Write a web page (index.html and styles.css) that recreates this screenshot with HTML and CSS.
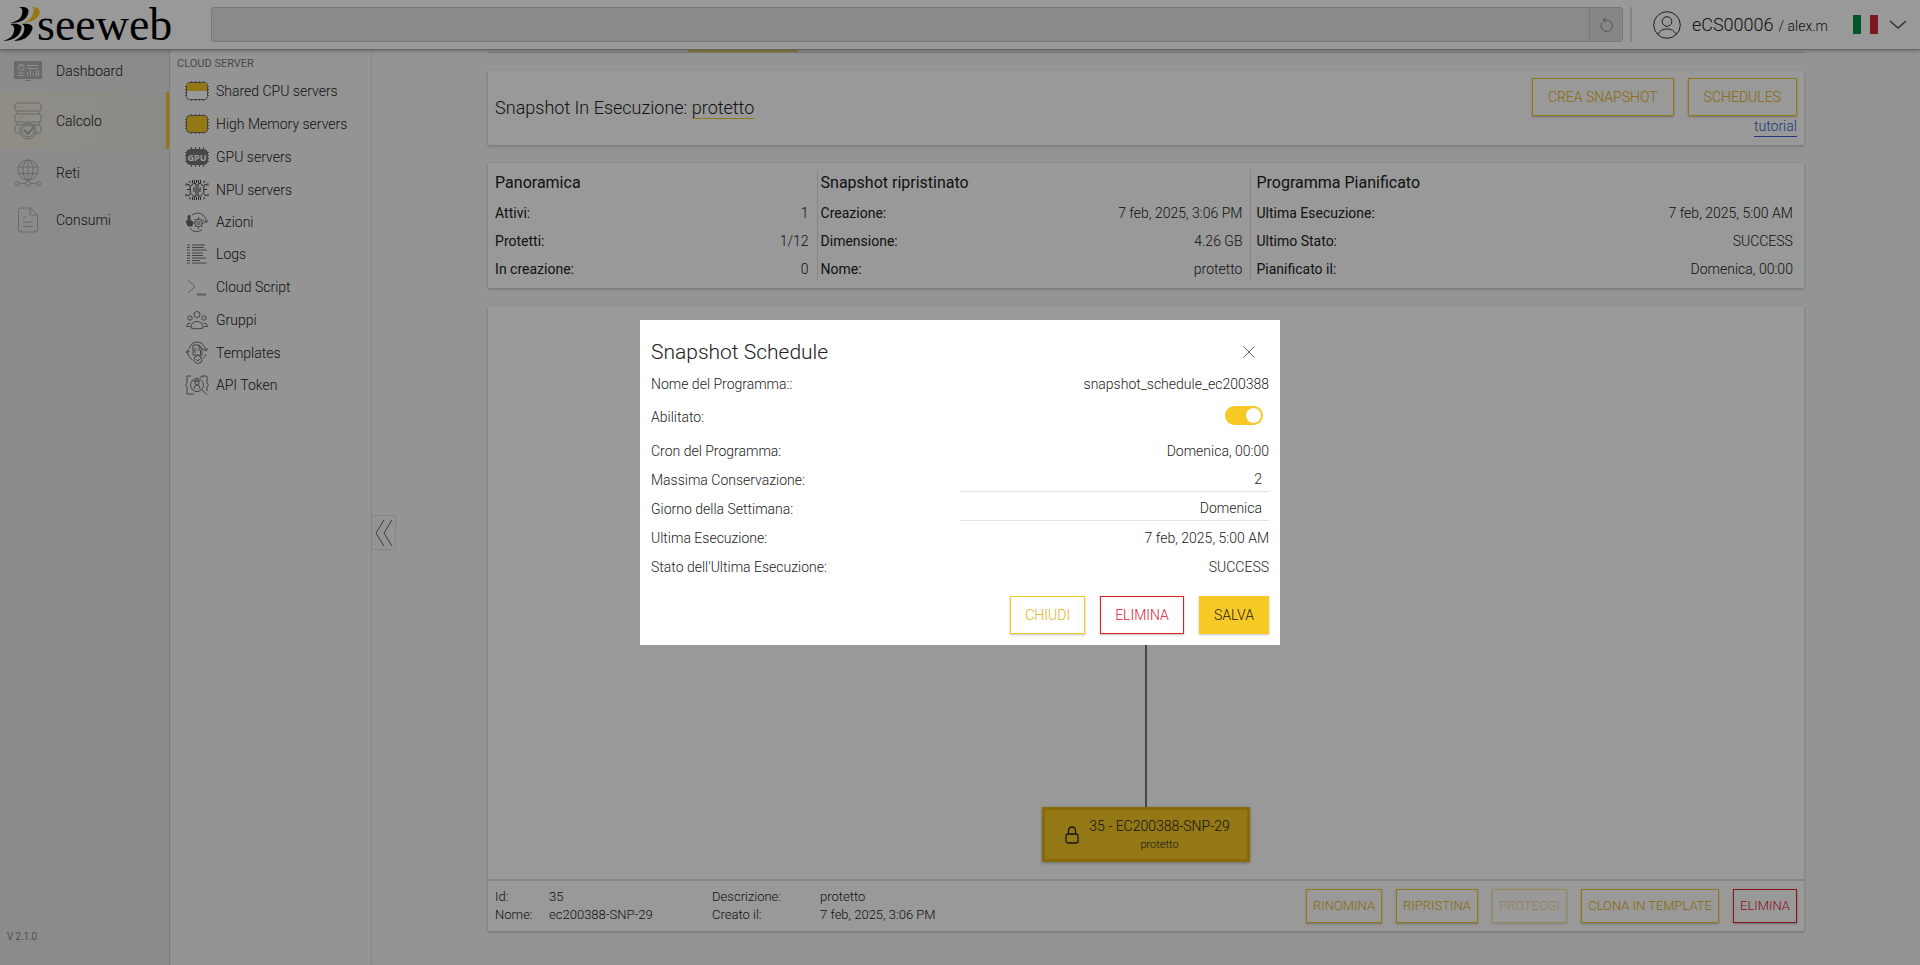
FILE: index.html
```html
<!DOCTYPE html>
<html lang="it">
<head>
<meta charset="utf-8">
<title>Seeweb - Snapshot</title>
<link rel="stylesheet" href="styles.css">
</head>
<body>
<div class="app">
  <header class="topbar">
    <a class="logo" href="#" aria-label="seeweb">
      <svg class="logo-mark" viewBox="0 0 38 36" aria-hidden="true">
        <path d="M16 0h4c6 0 6 4 5 7-2 6-8 9-18 9 7-2 11-4 12-9 1-4 0-6-3-7z"/>
        <path class="logo-gold" d="M29 0c7 0 9 3 7 8-3 5-8 7-15 8 5-3 8-5 9-10 1-3 1-5-1-6z"/>
        <path d="M7 17c9-1 13 1 11 6-2 7-9 11-18 11 7-2 10-5 11-10 1-4-1-6-4-7z"/>
        <path d="M19 17c9-1 12 2 10 6-3 7-9 11-18 11 6-3 9-6 10-10 1-4 0-6-2-7z"/>
      </svg>
      <span class="logo-name">seeweb</span>
    </a>
    <form class="search">
      <input class="search-input" type="text" aria-label="Cerca">
      <button class="search-reload" type="button" aria-label="Ricarica">
        <svg width="16" height="18" viewBox="0 0 16 18"><path d="M4 6.500A5.700 5.700 0 1 0 9 4H5M7.500 1.500 5 4l2.500 2.500"/></svg>
      </button>
    </form>
    <div class="account">
      <svg class="avatar" width="28" height="28" viewBox="0 0 28 28"><circle cx="14" cy="14" r="13.300"/><circle cx="14" cy="10.500" r="4.800"/><path d="M5 23.500c1.500-4 5-5.500 9-5.500s7.500 1.500 9 5.500"/></svg>
      <span class="account-code">eCS00006</span><span class="account-user">/ alex.m</span>
      <svg class="flag" width="25" height="19" viewBox="0 0 25 19"><path fill="#009246" d="M0 0h8v19H0z"/><path fill="#fff" d="M8 0h9v19H8z"/><path fill="#ce2b37" d="M17 0h8v19h-8z"/></svg>
      <button class="account-menu" type="button" aria-label="Menu utente"><svg width="18" height="10" viewBox="0 0 18 10"><path d="m1 1 8 7 8-7"/></svg></button>
    </div>
  </header>

  <div class="body">
    <nav class="primary" aria-label="Principale">
      <a class="primary-item row-dashboard" href="#">
        <svg class="primary-icon" viewBox="0 0 28 20" width="28" height="20"><rect x=".5" y=".5" width="27" height="17" fill="#b4b4b4"/><path d="M11 19.500h6"/><g stroke="#eee"><circle cx="7" cy="6.500" r="3"/><path d="M7 6.500V3M13 4.500h11M13 7.500h11M4 12h6M4 14.500h6M13.500 15v-4M16.500 15V9M19.500 15v-3M22.500 15v-5M24.500 15V9"/></g></svg>
        <span>Dashboard</span>
      </a>
      <a class="primary-item row-calcolo is-active" href="#" aria-current="page">
        <svg class="primary-icon" viewBox="0 0 28 38" width="28" height="38"><rect x="1" y="1" width="26" height="8" rx="2"/><rect x="1" y="12" width="26" height="8" rx="2"/><path d="M3 9v3M25 9v3M3 20v3M25 20v3M7 31H3q-2 0-2-2v-4q0-2 2-2h22q2 0 2 2v4q0 2-2 2h-3M5 5h1M8 5h1M5 16h1M8 16h1M5 26h1"/><circle cx="14" cy="29" r="8"/><circle cx="14" cy="29" r="6"/><path d="m10 28 4 4 7-9" stroke-width="2"/></svg>
        <span>Calcolo</span>
      </a>
      <a class="primary-item row-reti" href="#">
        <svg class="primary-icon" viewBox="0 0 28 28" width="28" height="28"><circle cx="14" cy="11" r="10"/><ellipse cx="14" cy="11" rx="5" ry="10"/><path d="M14 1v21M4.500 8h19M4.500 14.500h19M5 24.500h6M17 24.500h6"/><circle cx="3" cy="24.500" r="2"/><circle cx="14" cy="24.500" r="2.500"/><circle cx="25" cy="24.500" r="2"/></svg>
        <span>Reti</span>
      </a>
      <a class="primary-item row-consumi" href="#">
        <svg class="primary-icon" viewBox="0 0 28 26" width="28" height="26"><path d="M16 1H7Q4.500 1 4.500 3.500v19Q4.500 25 7 25h14q2.500 0 2.500-2.500V8L16 1v7h7.500M9 10h3M9 15h10M9 19.500h10"/></svg>
        <span>Consumi</span>
      </a>
      <small class="version">V 2.1.0</small>
    </nav>

    <nav class="secondary" aria-label="Cloud server">
      <h2 class="secondary-title">CLOUD SERVER</h2>
      <a class="secondary-item" href="#">
        <svg class="sub-icon" viewBox="0 0 24 20"><path d="M6.500 0v20M10.500 0v20M14.500 0v20M18.500 0v20M0 5.500h24M0 8.500h24M0 11.500h24M0 14.500h24"/><rect x="1.500" y="1.500" width="21" height="17" rx="3" fill="#fff"/><path d="M2 10V4q0-2 2-2h16q2 0 2 2v6z" fill="#f6c924" stroke="none"/></svg>
        <span>Shared CPU servers</span></a>
      <a class="secondary-item" href="#">
        <svg class="sub-icon" viewBox="0 0 24 20"><path d="M6.500 0v20M10.500 0v20M14.500 0v20M18.500 0v20M0 5.500h24M0 8.500h24M0 11.500h24M0 14.500h24"/><rect x="1.500" y="1.500" width="21" height="17" rx="3" fill="#f6c924"/></svg>
        <span>High Memory servers</span></a>
      <a class="secondary-item" href="#">
        <svg class="sub-icon" viewBox="0 0 24 20"><path d="M6.500 0v20M10.500 0v20M14.500 0v20M18.500 0v20M0 5.500h24M0 8.500h24M0 11.500h24M0 14.500h24"/><rect x="1.500" y="2.500" width="21" height="15" rx="4" fill="#777"/><text class="chip-text" x="12" y="14">GPU</text></svg>
        <span>GPU servers</span></a>
      <a class="secondary-item" href="#">
        <svg class="sub-icon" viewBox="0 0 24 20"><path stroke="#444" d="M7.500 0v3M9.500 0v3M11.500 0v3M13.500 0v3M15.500 0v3M7.500 17v3M9.500 17v3M11.500 17v3M13.500 17v3M15.500 17v3M2 4.500h2l1 2M22 4.500h-2l-1 2M2 9.500h3M22 9.500h-3M2 15.500h2l1-2M22 15.500h-2l-1-2"/><path stroke="#444" d="M11 4Q8 2 7 5 4 6 5.500 9.500 4 13 7 14.500q1 3 4 1.500zM13 4q3-2 4 1 3 1 1.500 4.500Q20 13 17 14.500q-1 3-4 1.500zM8 8h1v4M16 8h-1v4"/><path fill="#d9ae12" stroke="#777" stroke-width=".5" d="M.5 3.500h1.500v2H.5zM.5 14h1.500v2H.5zM22 3.500h1.500v2H22zM22 14h1.500v2H22zM4 1h1.500v1.500H4zM18.500 1H20v1.500h-1.500zM4 17.500h1.500V19H4zM18.500 17.500H20V19h-1.500z"/></svg>
        <span>NPU servers</span></a>
      <a class="secondary-item is-short" href="#">
        <svg class="sub-icon" viewBox="0 0 24 20"><path d="M7 3Q13-1 18 3q4 3 3 7M23 8l-2 3-3-3M17 18Q9 22 5 16"/><circle cx="13.500" cy="11" r="3.800"/><circle cx="13.500" cy="11" r="1.500"/><path d="M13.500 5v2M13.500 15v2M8 11h2M17 11h2M9.500 7l1.500 1.500M17.500 7 16 8.500M9.500 15l1.500-1.500M17.500 15 16 13.500"/><path d="M1 9h2V4l2-1v5l3 2-1 4H3z" fill="#666"/></svg>
        <span>Azioni</span></a>
      <a class="secondary-item" href="#">
        <svg class="sub-icon" viewBox="0 0 24 20"><path d="M2 1h3M7 1h13M2 3.500h3M7 3.500h12M2 6h3M7 6h15M2 9h3M7 9h11M2 11.500h3M7 11.500h11M2 14h3M7 14h14M2 16.500h3M7 16.500h8M2 19h3M7 19h15"/></svg>
        <span>Logs</span></a>
      <a class="secondary-item" href="#">
        <svg class="sub-icon icon-faint" viewBox="0 0 24 20"><path d="m3 3 7 6.500L3 16"/><path d="M12 17.500h9" stroke-width="2"/></svg>
        <span>Cloud Script</span></a>
      <a class="secondary-item" href="#">
        <svg class="sub-icon" viewBox="0 0 24 20"><circle cx="12" cy="4.500" r="3"/><circle cx="5" cy="8" r="2.200"/><circle cx="19" cy="8" r="2.200"/><path d="M6 18q0-6.500 6-6.500t6 6.500q-6 2-12 0zM5.500 13q-4 0-4 3.500H5M18.500 13q4 0 4 3.500H19"/></svg>
        <span>Gruppi</span></a>
      <a class="secondary-item" href="#">
        <svg class="sub-icon icon-tall" viewBox="0 0 24 24"><path d="M4 8q2-7 8-7t9 8M23 7l-2 3-3-2M1 12l1.500-3L5 11M2.500 10q0 6 5 9M21 13q-1 3-3 4"/><path d="M9 4h5l3 3v7H8V4zM14 4v3h3M10 7v5M12.500 9h3v5"/><circle cx="13" cy="18.500" r="4"/><path d="m11 18 2 2 3-3"/></svg>
        <span>Templates</span></a>
      <a class="secondary-item is-short" href="#">
        <svg class="sub-icon" viewBox="0 0 24 20"><path d="M6 1H2v7L.500 10 2 12v7h5M18 1h4v7l1.500 2L22 12v4M8 18v2M15 2h3V0"/><circle cx="12" cy="10" r="6.500"/><path d="m16.500 14.500 6 5.500M9 14q0-4 3-4t3 4M8 7l3-2 4 1"/><circle cx="12" cy="8" r="2"/></svg>
        <span>API Token</span></a>
    </nav>

    <main class="content">
      <button class="collapse" type="button" aria-label="Comprimi menu"><svg width="18" height="28" viewBox="0 0 18 28"><path d="M9 1 1 14l8 13M17 1 9 14l8 13"/></svg></button>
      <div class="tabs"><span class="tab-marker"></span></div>

      <section class="card heading-card">
        <h1 class="page-title">Snapshot In Esecuzione: <a class="running" href="#">protetto</a></h1>
        <div class="heading-side">
          <div class="heading-actions">
            <button class="btn btn-wide" type="button">CREA SNAPSHOT</button>
            <button class="btn btn-wide" type="button">SCHEDULES</button>
          </div>
          <a class="tutorial" href="#">tutorial</a>
        </div>
      </section>

      <section class="card overview">
        <div class="summary">
          <h3 class="summary-title">Panoramica</h3>
          <dl class="facts">
            <div class="fact"><dt>Attivi:</dt><dd>1</dd></div>
            <div class="fact"><dt>Protetti:</dt><dd>1/12</dd></div>
            <div class="fact"><dt>In creazione:</dt><dd>0</dd></div>
          </dl>
        </div>
        <div class="summary">
          <h3 class="summary-title">Snapshot ripristinato</h3>
          <dl class="facts">
            <div class="fact"><dt>Creazione:</dt><dd>7 feb, 2025, 3:06 PM</dd></div>
            <div class="fact"><dt>Dimensione:</dt><dd>4.26 GB</dd></div>
            <div class="fact"><dt>Nome:</dt><dd>protetto</dd></div>
          </dl>
        </div>
        <div class="summary summary-last">
          <h3 class="summary-title">Programma Pianificato</h3>
          <dl class="facts">
            <div class="fact"><dt>Ultima Esecuzione:</dt><dd>7 feb, 2025, 5:00 AM</dd></div>
            <div class="fact"><dt>Ultimo Stato:</dt><dd>SUCCESS</dd></div>
            <div class="fact"><dt>Pianificato il:</dt><dd>Domenica, 00:00</dd></div>
          </dl>
        </div>
      </section>

      <section class="card tree">
        <div class="tree-canvas">
          <div class="tree-line"></div>
          <button class="node" type="button">
            <svg class="lock" width="14" height="18" viewBox="0 0 14 18"><rect x="1" y="8" width="12" height="9" rx="2"/><path d="M3.500 8V4.500a3.500 3.500 0 0 1 7 0V8"/></svg>
            <span class="node-label"><span class="node-name">35 - EC200388-SNP-29</span><span class="node-note">protetto</span></span>
          </button>
        </div>
        <footer class="detail">
          <dl class="detail-list">
            <dt>Id:</dt><dd>35</dd><dt>Descrizione:</dt><dd>protetto</dd>
            <dt>Nome:</dt><dd>ec200388-SNP-29</dd><dt>Creato il:</dt><dd>7 feb, 2025, 3:06 PM</dd>
          </dl>
          <div class="detail-actions">
            <button class="btn btn-small" type="button">RINOMINA</button>
            <button class="btn btn-small" type="button">RIPRISTINA</button>
            <button class="btn btn-small" type="button" disabled>PROTEGGI</button>
            <button class="btn btn-small" type="button">CLONA IN TEMPLATE</button>
            <button class="btn btn-small btn-danger" type="button">ELIMINA</button>
          </div>
        </footer>
      </section>
    </main>
  </div>
</div>

<div class="overlay">
  <form class="modal" role="dialog" aria-modal="true" aria-labelledby="modal-title">
    <div class="modal-head">
      <h2 class="modal-title" id="modal-title">Snapshot Schedule</h2>
      <button class="close" type="button" aria-label="Chiudi"><svg width="12" height="12" viewBox="0 0 12 12"><path d="m.5.500 11 11M11.500.500l-11 11"/></svg></button>
    </div>
    <div class="field"><span>Nome del Programma::</span><span>snapshot_schedule_ec200388</span></div>
    <div class="field field-switch"><label for="enabled">Abilitato:</label><input class="switch" id="enabled" type="checkbox" role="switch" checked></div>
    <div class="field"><span>Cron del Programma:</span><span>Domenica, 00:00</span></div>
    <div class="field"><label for="retention">Massima Conservazione:</label><input class="entry" id="retention" type="text" value="2"></div>
    <div class="field"><label for="weekday">Giorno della Settimana:</label><select class="entry" id="weekday"><option>Domenica</option></select></div>
    <div class="field"><span>Ultima Esecuzione:</span><span>7 feb, 2025, 5:00 AM</span></div>
    <div class="field"><span>Stato dell'Ultima Esecuzione:</span><span>SUCCESS</span></div>
    <div class="modal-actions">
      <button class="btn" type="button">CHIUDI</button>
      <button class="btn btn-danger" type="button">ELIMINA</button>
      <button class="btn btn-solid" type="button">SALVA</button>
    </div>
  </form>
</div>
</body>
</html>
```
FILE: styles.css
```css
* { box-sizing: border-box; }
body, h1, h2, h3, dl, dd { margin: 0; }
body {
  font: 300 14px/20px Roboto, "Liberation Sans", sans-serif;
  color: #212121;
  background: #f9f9f9;
}
button, input, select { font: inherit; color: inherit; margin: 0; border-radius: 0; }
button { cursor: pointer; }
a { color: inherit; text-decoration: none; }
svg { fill: none; stroke: #666; flex: none; }

.app { display: flex; flex-direction: column; height: 100vh; overflow: hidden; }

/* Top bar */
.topbar {
  display: flex;
  align-items: center;
  height: 50px;
  flex: none;
  background: #fff;
  border-bottom: 1px solid #a8a8a8;
  box-shadow: 0 1px 4px rgba(0, 0, 0, .3);
  z-index: 1;
}
.logo { display: flex; align-items: center; width: 211px; padding-left: 3px; color: #000; }
.logo-mark { width: 38px; height: 36px; fill: #000; stroke: none; }
.logo-gold { fill: #f6c924; }
.logo-name { font: 400 46px/48px "Liberation Serif", serif; margin-left: -4px; }
.search {
  display: flex;
  flex: 1;
  height: 35px;
  border: 1px solid #c6c6c6;
  border-radius: 3px;
  background: #e6e6e6;
}
.search-input { flex: 1; border: 0; background: transparent; padding: 0 8px; }
.search-reload {
  width: 33px;
  padding: 0;
  border: 0;
  border-left: 1px solid #c6c6c6;
  background: #dfdfdf;
  display: grid;
  place-items: center;
}
.search-reload svg { stroke: #888; }
.account {
  display: flex;
  align-items: center;
  height: 35px;
  margin-left: 7px;
  padding: 0 13px 0 21px;
  border-left: 2px solid #dcdcdc;
}
.avatar { stroke: #333; margin-right: 11px; }
.account-code { font-size: 18px; }
.account-user { font-size: 14px; margin-left: 5px; padding-top: 2px; }
.flag { stroke: none; margin: 0 11px 0 25px; }
.account-menu { display: flex; border: 0; padding: 0; background: none; }
.account-menu svg { stroke: #555; stroke-width: 1.5; }

.body { display: flex; flex: 1; min-height: 0; }

/* Primary navigation */
.primary {
  display: flex;
  flex-direction: column;
  width: 170px;
  flex: none;
  background: #e8e8e8;
  border-right: 1px solid #cfcfcf;
}
.primary-item { display: flex; align-items: center; gap: 14px; padding-left: 14px; }
.row-dashboard { height: 42px; }
.row-calcolo { height: 57px; }
.row-reti { height: 48px; }
.row-consumi { height: 46px; }
.is-active {
  background: linear-gradient(90deg, #efecdf, #e8e6df);
  border-right: 3px solid #f6c924;
}
.primary-icon { stroke: #b0b0b0; }
.version { margin-top: auto; padding: 0 0 18px 7px; font-size: 10px; color: #555; }

/* Secondary navigation */
.secondary {
  width: 202px;
  flex: none;
  padding-top: 4px;
  background: #f7f7f7;
  border-right: 1px solid #dedede;
}
.secondary-title { padding-left: 7px; font-size: 11px; line-height: 20px; font-weight: 400; color: #777; }
.secondary-item { display: flex; align-items: center; gap: 7px; height: 33px; padding-left: 15px; }
.secondary-item.is-short { height: 31px; }
.sub-icon { width: 24px; height: 20px; stroke: #707070; }
.icon-tall { height: 24px; }
.icon-faint { stroke: #999; }
.chip-text { font: 700 9px "Open Sans", sans-serif; fill: #fff; stroke: none; text-anchor: middle; }

/* Content */
.content {
  flex: 1;
  display: flex;
  flex-direction: column;
  position: relative;
  min-width: 0;
  padding: 0 calc((100vw - 372px) * .075) 34px;
  background: radial-gradient(#f5f5f5 1px, transparent 1px) 0 0 / 4px 4px, #f9f9f9;
}
.collapse {
  position: absolute;
  left: 0;
  top: 465px;
  width: 24px;
  height: 35px;
  display: grid;
  place-items: center;
  padding: 0;
  border: 1px solid #dedede;
  border-left: 0;
  border-radius: 0 3px 3px 0;
  background: #f7f7f7;
}
.tabs { height: 3px; flex: none; border-bottom: 1px solid #d5d5d5; margin-bottom: 18px; }
.tab-marker { display: block; width: 110px; height: 2px; margin-left: 200px; background: #f0d060; }
.card { background: #fff; box-shadow: 0 1px 3px rgba(0, 0, 0, .25); }
.heading-card {
  display: flex;
  justify-content: space-between;
  align-items: center;
  padding: 7px;
  height: 74px;
  flex: none;
  margin-bottom: 18px;
}
.page-title { font-size: 18px; font-weight: 300; line-height: 22px; }
.running { border-bottom: 1px solid #f6c924; }
.heading-side { display: flex; flex-direction: column; align-items: flex-end; align-self: flex-start; }
.heading-actions { display: flex; gap: 14px; }
.tutorial { color: #2f5fd0; border-bottom: 1px solid #2f5fd0; line-height: 20px; }

.btn {
  height: 38px;
  padding: 0 14px;
  border: 1px solid #f6c924;
  background: #fff;
  color: #e5b10a;
  box-shadow: 0 1px 2px rgba(0, 0, 0, .25);
}
.btn-wide { padding: 0 15px; }
.btn-small { height: 34px; padding: 0 6px; font-size: 13px; }
.btn-danger { border-color: #e02020; color: #e02030; }
.btn-solid { background: #f6c924; color: #212121; }
.btn:disabled { opacity: .5; }

.overview {
  display: grid;
  grid-template-columns: 3fr 4fr 5fr;
  padding: 7px;
  height: 125px;
  flex: none;
  margin-bottom: 18px;
}
.summary { border-right: 1px solid #dedede; margin-right: 3px; padding-right: 8px; }
.summary-last { border: 0; margin: 0; padding: 0 4px 0 2px; }
.summary-title { font-size: 16px; line-height: 26px; font-weight: 400; margin-bottom: 7px; }
.facts { display: grid; gap: 8px; }
.fact { display: flex; justify-content: space-between; }
.fact dt { font-weight: 400; }

.tree { display: flex; flex-direction: column; flex: 1; min-height: 0; }
.tree-canvas { display: flex; flex-direction: column; align-items: center; flex: 1; padding: 60px 0 17px; }
.tree-line { flex: 1; width: 2px; background: #777; }
.node {
  display: flex;
  align-items: center;
  gap: 10px;
  height: 55px;
  padding: 0 17px 0 20px;
  border: 3px solid #e5b10a;
  background: #f6c924;
  box-shadow: 0 1px 3px rgba(0, 0, 0, .3);
}
.lock { stroke: #212121; stroke-width: 1.3; }
.node-label { display: grid; text-align: center; }
.node-name { line-height: 20px; }
.node-note { font-size: 11px; line-height: 18px; }
.detail {
  display: flex;
  justify-content: space-between;
  align-items: center;
  border-top: 2px solid #e2e2e2;
  padding: 8px 7px;
  height: 52px;
}
.detail-list {
  display: grid;
  grid-template-columns: 54px 163px 108px auto;
  font-size: 13px;
  line-height: 18px;
}
.detail-actions { display: flex; gap: 14px; }

/* Dialog */
.overlay {
  position: fixed;
  inset: 0;
  z-index: 2;
  display: grid;
  place-items: center;
  background: rgba(0, 0, 0, .4);
}
.modal { width: 640px; padding: 11px; background: #fff; }
.modal-head { display: flex; justify-content: space-between; align-items: center; height: 38px; padding: 4px 14px 0 0; }
.modal-title { font-size: 21px; line-height: 30px; font-weight: 300; }
.close { display: flex; padding: 0; border: 0; background: none; }
.field { display: flex; justify-content: space-between; align-items: center; height: 29px; }
.field-switch { height: 38px; }
.switch {
  appearance: none;
  width: 38px;
  height: 19px;
  padding: 2px;
  margin: 0 6px 4px 0;
  border-radius: 10px;
  background: #f6c924;
  display: flex;
  justify-content: flex-end;
}
.switch::before { content: ""; width: 15px; height: 15px; border-radius: 50%; background: #fff; }
.entry {
  appearance: none;
  width: 309px;
  height: 24px;
  padding: 0 7px;
  border: 0;
  border-bottom: 1px solid #e2e2e2;
  background: #fff;
  text-align: right;
  text-align-last: right;
}
.modal-actions { display: flex; justify-content: flex-end; gap: 15px; margin-top: 15px; }
```
